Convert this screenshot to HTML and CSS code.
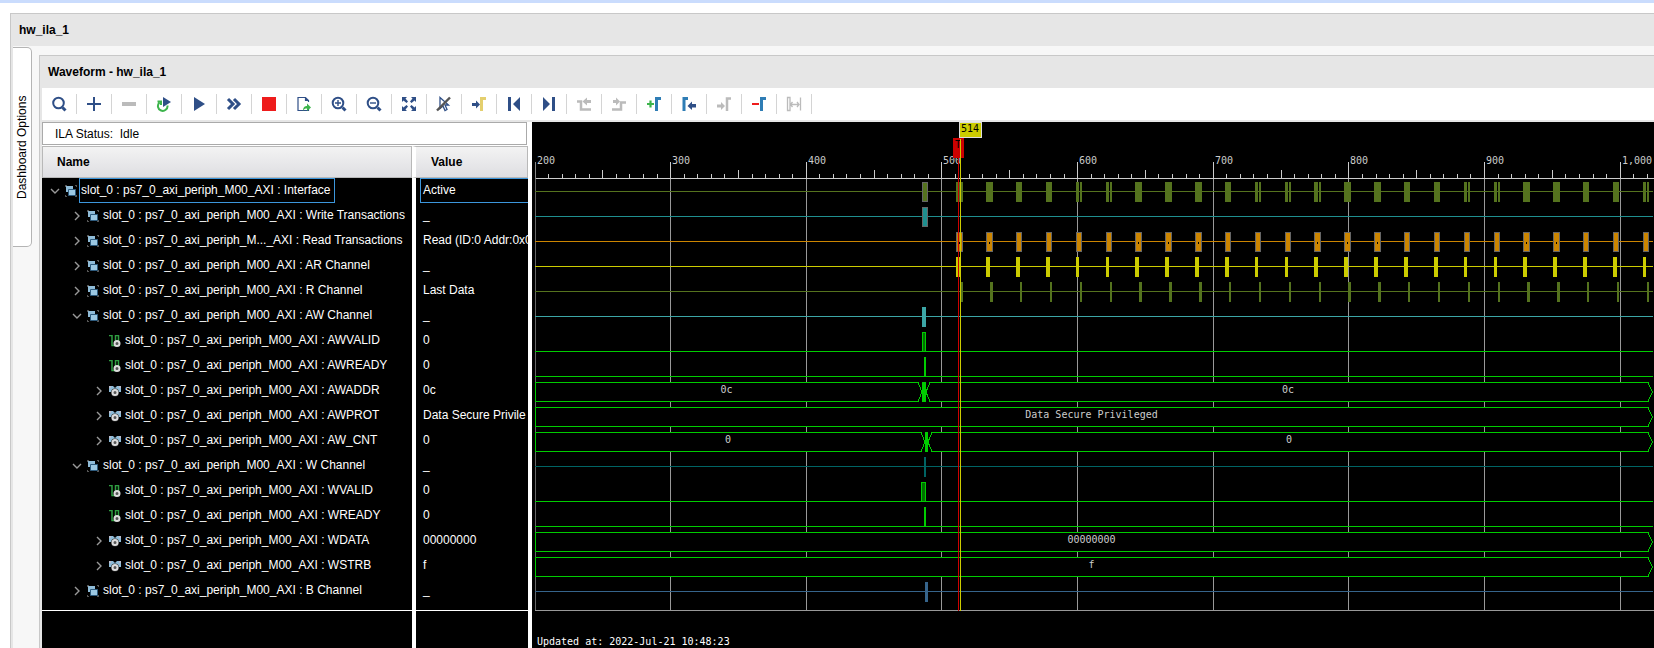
FILE: index.html
```html
<!DOCTYPE html>
<html lang="en">
  <head>
    <meta charset="utf-8">
    <title>hw_ila_1</title>
    <link rel="stylesheet" href="styles.css">
  </head>
  <body>
    <svg class="symbols">
      <symbol id="open" viewBox="0 0 10 10"><path d="M1 3l4 4 4-4" fill="none" stroke="#999" stroke-width="1.4"/></symbol>
      <symbol id="closed" viewBox="0 0 10 10"><path d="M3 1l4 4-4 4" fill="none" stroke="#999" stroke-width="1.4"/></symbol>
      <symbol id="group" viewBox="0 0 12 12">
        <path d="M0 .5h2M.5 0v2M10 .5h2M11.5 0v2M0 11.5h2M.5 10v2M10 11.5h2M11.5 10v2" stroke="#555"/>
        <path d="M1 1h7v6H1z" fill="#8fbcd8"/>
        <path d="M3.500 4.500h7v6h-7z" fill="#9cc8e2" stroke="#2d5a7d"/>
      </symbol>
      <symbol id="wire" viewBox="0 0 12 12">
        <path d="M0 .5h3v10h3.500v-10h3V6" fill="none" stroke="#2f9e41" stroke-width="1.500"/>
        <circle cx="8" cy="8.500" r="2.500" fill="#555" stroke="#ddd" stroke-width="2"/>
      </symbol>
      <symbol id="bus" viewBox="0 0 12 12">
        <path d="M0 1h4l2 2 2-2h4v6H0z" fill="#8fbcd8"/>
        <path d="M0 1h2v2H0zM10 1h2v2h-2z" fill="#bbc"/>
        <circle cx="6" cy="7.500" r="4" fill="#333"/>
        <circle cx="6" cy="7.500" r="2.500" fill="#555" stroke="#ddd" stroke-width="2"/>
      </symbol>
    </svg>

    <div class="dashboard">
      <h1 class="title">hw_ila_1</h1>
      <div class="content">
        <button class="side-tab">Dashboard Options</button>
        <div class="waveform">
          <h2 class="title">Waveform - hw_ila_1</h2>
          <div class="toolbar">
            <button title="Search"><svg viewBox="0 0 16 16"><circle cx="7.500" cy="7" r="5.300" class="line"/><path class="line thick" d="M11.500 11.500l3 3"/></svg></button>
            <button title="Add"><svg viewBox="0 0 16 16"><path class="navy" d="M7 1h2v6h6v2H9v6H7V9H1V7h6z"/></svg></button>
            <button title="Remove"><svg viewBox="0 0 16 16"><path class="grey" d="M1 6h14v4H1z"/></svg></button>
            <button title="Auto re-trigger"><svg viewBox="0 0 16 16"><path d="M1.500 5.500H5V9M3.500 6.500a4.800 4.800 0 1 0 8 3" fill="none" stroke="#3cb44b" stroke-width="2"/><path class="navy" d="M7 1l8 5-8 5z"/></svg></button>
            <button title="Run trigger"><svg viewBox="0 0 16 16"><path class="navy" d="M3 1l11 7-11 7z"/></svg></button>
            <button title="Run trigger immediate"><svg viewBox="0 0 16 16"><path class="line thick" d="M2 3l5 5-5 5M8 3l5 5-5 5"/></svg></button>
            <button title="Stop trigger"><svg viewBox="0 0 16 16"><path d="M1 1h14v14H1z" fill="#ee1c1c"/></svg></button>
            <button title="Export data"><svg viewBox="0 0 16 16"><path d="M12.500 6V4.500l-3-3h-7.500v13h10.500V13M9.500 1.500v3h3" fill="none" stroke="#2f4f87" stroke-width="1.200"/><path d="M7 15c0-4 2-5 4-5V7.500l4 4-4 3.500v-2.500c-2 0-3 .5-4 2.500z" fill="#3cb44b"/></svg></button>
            <button title="Zoom in"><svg viewBox="0 0 16 16"><circle cx="7" cy="7" r="5.300" class="line"/><path class="line thick" d="M11.500 11.500l3 3"/><path d="M4 7h6M7 4v6" stroke="#2f4f87" stroke-width="1.400"/></svg></button>
            <button title="Zoom out"><svg viewBox="0 0 16 16"><circle cx="7" cy="7" r="5.300" class="line"/><path class="line thick" d="M11.500 11.500l3 3"/><path d="M4 7h6" stroke="#2f4f87" stroke-width="1.400"/></svg></button>
            <button title="Zoom fit"><svg viewBox="0 0 16 16"><path class="navy" d="M1 1h5L4.500 2.500l2.500 3L5.500 7l-3-2.500L1 6zM15 1v5l-1.500-1.500-3 2.500L9 5.500l2.500-3L10 1zM1 15v-5l1.500 1.500 3-2.500L7 10.500l-2.500 3L6 15zM15 15h-5l1.500-1.500-2.500-3L10.500 9l3 2.500L15 10z"/></svg></button>
            <button title="Cursor snap"><svg viewBox="0 0 16 16"><path d="M4 1.500l8.500 7.500H9l2 4.500-2 1-2-4.500-3 2.500z" fill="none" stroke="#2f4f87" stroke-width="1.300"/><path d="M1 14.500L14 1.500" stroke="#555" stroke-width="2.400"/></svg></button>
            <button title="Go to cursor"><svg viewBox="0 0 16 16"><path class="navy" d="M1 7h4V4.500l4 4-4 4V10H1z"/><path d="M10.500 15V2.500H15" fill="none" stroke="#e4cf6e" stroke-width="3"/></svg></button>
            <button title="Go to start"><svg viewBox="0 0 16 16"><path class="navy" d="M2 1h3v14H2zM14 1v14L7 8z"/></svg></button>
            <button title="Go to end"><svg viewBox="0 0 16 16"><path class="navy" d="M11 1h3v14h-3zM2 1v14l7-7z"/></svg></button>
            <button title="Previous transition"><svg viewBox="0 0 16 16"><path d="M1 5.500h4v8h10" fill="none" stroke="#bbb" stroke-width="2.500"/><path class="grey" d="M15 4h-4V1.500L6.500 5.500 11 9.500V7h4z"/></svg></button>
            <button title="Next transition"><svg viewBox="0 0 16 16"><path d="M1 13.500h9v-7h5" fill="none" stroke="#bbb" stroke-width="2.500"/><path class="grey" d="M2 4h3V1.500l4 4-4 4V7H2z"/></svg></button>
            <button title="Add marker"><svg viewBox="0 0 16 16"><path d="M1 8h7M4.500 4.500v7" stroke="#3cb44b" stroke-width="2.200"/><path d="M10.500 15V2.500H15" fill="none" stroke="#2f7db5" stroke-width="3"/></svg></button>
            <button title="Previous marker"><svg viewBox="0 0 16 16"><path d="M3 15V2.500h4" fill="none" stroke="#2f7db5" stroke-width="3"/><path class="navy" d="M15 8h-4V5.500L6.500 10l4.500 4v-2.500h4z"/></svg></button>
            <button title="Next marker"><svg viewBox="0 0 16 16"><path d="M11 15V2.500h4" fill="none" stroke="#bbb" stroke-width="2.500"/><path class="grey" d="M1 8.500h4V6l4 4-4 4v-2.500H1z"/></svg></button>
            <button title="Remove marker"><svg viewBox="0 0 16 16"><path d="M1 8h7" stroke="#ee1c1c" stroke-width="2"/><path d="M10.500 15V2.500H15" fill="none" stroke="#2f7db5" stroke-width="3"/></svg></button>
            <button title="Measure"><svg viewBox="0 0 16 16"><path d="M1.500 1.500h2.500v13H1.500zM14.500 1.500v13M4 8.500h9M6.500 6l-2 2.500 2 2.500M11 6l2 2.500-2 2.500" fill="none" stroke="#bbb" stroke-width="1.300"/></svg></button>
          </div>

          <div class="panes">
            <div class="signals">
              <div class="status">ILA Status:&nbsp; Idle</div>
              <div class="table-wrap">
                <table>
                  <thead>
                    <tr><th class="name">Name</th><th class="value">Value</th></tr>
                  </thead>
                  <tbody>
                    <tr class="selected"><td><div class="node"><button class="toggle" aria-label="Collapse"><svg><use href="#open"/></svg></button><svg class="icon"><use href="#group"/></svg><span>slot_0 : ps7_0_axi_periph_M00_AXI : Interface</span></div></td><td><div class="val">Active</div></td></tr>
                    <tr><td><div class="node l1"><button class="toggle" aria-label="Expand"><svg><use href="#closed"/></svg></button><svg class="icon"><use href="#group"/></svg><span>slot_0 : ps7_0_axi_periph_M00_AXI : Write Transactions</span></div></td><td><div class="val">_</div></td></tr>
                    <tr><td><div class="node l1"><button class="toggle" aria-label="Expand"><svg><use href="#closed"/></svg></button><svg class="icon"><use href="#group"/></svg><span>slot_0 : ps7_0_axi_periph_M..._AXI : Read Transactions</span></div></td><td><div class="val">Read (ID:0 Addr:0x0</div></td></tr>
                    <tr><td><div class="node l1"><button class="toggle" aria-label="Expand"><svg><use href="#closed"/></svg></button><svg class="icon"><use href="#group"/></svg><span>slot_0 : ps7_0_axi_periph_M00_AXI : AR Channel</span></div></td><td><div class="val">_</div></td></tr>
                    <tr><td><div class="node l1"><button class="toggle" aria-label="Expand"><svg><use href="#closed"/></svg></button><svg class="icon"><use href="#group"/></svg><span>slot_0 : ps7_0_axi_periph_M00_AXI : R Channel</span></div></td><td><div class="val">Last Data</div></td></tr>
                    <tr><td><div class="node l1"><button class="toggle" aria-label="Collapse"><svg><use href="#open"/></svg></button><svg class="icon"><use href="#group"/></svg><span>slot_0 : ps7_0_axi_periph_M00_AXI : AW Channel</span></div></td><td><div class="val">_</div></td></tr>
                    <tr><td><div class="node l2 leaf"><svg class="icon"><use href="#wire"/></svg><span>slot_0 : ps7_0_axi_periph_M00_AXI : AWVALID</span></div></td><td><div class="val">0</div></td></tr>
                    <tr><td><div class="node l2 leaf"><svg class="icon"><use href="#wire"/></svg><span>slot_0 : ps7_0_axi_periph_M00_AXI : AWREADY</span></div></td><td><div class="val">0</div></td></tr>
                    <tr><td><div class="node l2"><button class="toggle" aria-label="Expand"><svg><use href="#closed"/></svg></button><svg class="icon"><use href="#bus"/></svg><span>slot_0 : ps7_0_axi_periph_M00_AXI : AWADDR</span></div></td><td><div class="val">0c</div></td></tr>
                    <tr><td><div class="node l2"><button class="toggle" aria-label="Expand"><svg><use href="#closed"/></svg></button><svg class="icon"><use href="#bus"/></svg><span>slot_0 : ps7_0_axi_periph_M00_AXI : AWPROT</span></div></td><td><div class="val">Data Secure Privile</div></td></tr>
                    <tr><td><div class="node l2"><button class="toggle" aria-label="Expand"><svg><use href="#closed"/></svg></button><svg class="icon"><use href="#bus"/></svg><span>slot_0 : ps7_0_axi_periph_M00_AXI : AW_CNT</span></div></td><td><div class="val">0</div></td></tr>
                    <tr><td><div class="node l1"><button class="toggle" aria-label="Collapse"><svg><use href="#open"/></svg></button><svg class="icon"><use href="#group"/></svg><span>slot_0 : ps7_0_axi_periph_M00_AXI : W Channel</span></div></td><td><div class="val">_</div></td></tr>
                    <tr><td><div class="node l2 leaf"><svg class="icon"><use href="#wire"/></svg><span>slot_0 : ps7_0_axi_periph_M00_AXI : WVALID</span></div></td><td><div class="val">0</div></td></tr>
                    <tr><td><div class="node l2 leaf"><svg class="icon"><use href="#wire"/></svg><span>slot_0 : ps7_0_axi_periph_M00_AXI : WREADY</span></div></td><td><div class="val">0</div></td></tr>
                    <tr><td><div class="node l2"><button class="toggle" aria-label="Expand"><svg><use href="#closed"/></svg></button><svg class="icon"><use href="#bus"/></svg><span>slot_0 : ps7_0_axi_periph_M00_AXI : WDATA</span></div></td><td><div class="val">00000000</div></td></tr>
                    <tr><td><div class="node l2"><button class="toggle" aria-label="Expand"><svg><use href="#closed"/></svg></button><svg class="icon"><use href="#bus"/></svg><span>slot_0 : ps7_0_axi_periph_M00_AXI : WSTRB</span></div></td><td><div class="val">f</div></td></tr>
                    <tr><td><div class="node l1"><button class="toggle" aria-label="Expand"><svg><use href="#closed"/></svg></button><svg class="icon"><use href="#group"/></svg><span>slot_0 : ps7_0_axi_periph_M00_AXI : B Channel</span></div></td><td><div class="val">_</div></td></tr>
                    <tr class="end"><td></td><td></td></tr>
                    <tr class="rest"><td></td><td></td></tr>
                  </tbody>
                </table>
              </div>
            </div>
            <div class="plot"><svg id="waves"></svg></div>
          </div>
        </div>
      </div>
    </div>
    <script src="waves.js"></script>
  </body>
</html>
```

FILE: styles.css
```css
* { box-sizing: border-box; }

body {
  margin: 0;
  height: 100vh;
  overflow: hidden;
  display: flex;
  flex-direction: column;
  border-top: 3px solid #cadcfd;
  background: #fff;
  color: #000;
  font: 12px "Liberation Sans", Arial, sans-serif;
}

button {
  margin: 0;
  padding: 0;
  border: 0;
  background: none;
  color: inherit;
  font: inherit;
}

.symbols { position: absolute; width: 0; height: 0; }

.dashboard {
  flex: 1;
  min-height: 0;
  display: flex;
  flex-direction: column;
  margin: 10px 0 0 10px;
  border: solid #c8c8c8;
  border-width: 1px 0 0 1px;
  background: #e6e6e6;
}

.title {
  margin: 0;
  padding-left: 8px;
  font-size: 12px;
  font-weight: bold;
  line-height: 32px;
}

.content {
  flex: 1;
  min-height: 0;
  display: flex;
  align-items: flex-start;
  margin-left: 2px;
  background: #f7f7f7;
}

.side-tab {
  width: 19px;
  height: 200px;
  margin: 1px 7px 0 0;
  border: 1px solid #b4b4b4;
  border-width: 1px 0 1px 1px;
  border-radius: 5px 0 0 5px;
  background: #fff;
  writing-mode: vertical-rl;
  transform: rotate(180deg);
}

.waveform {
  flex: 1;
  min-width: 0;
  align-self: stretch;
  display: flex;
  flex-direction: column;
  margin-top: 9px;
  padding-left: 2px;
  border: solid #c8c8c8;
  border-width: 1px 0 0 1px;
  background: #e6e6e6;
}
.waveform .title { padding-left: 6px; }

.toolbar {
  display: flex;
  align-items: center;
  height: 32px;
  background: #fff;
}
.toolbar button {
  display: flex;
  align-items: center;
  justify-content: center;
  width: 35px;
  height: 20px;
  border-right: 1px solid #d4d4d4;
}
.toolbar svg { width: 16px; height: 16px; }
.navy { fill: #2f4f87; }
.grey { fill: #bbb; }
.line { fill: none; stroke: #2f4f87; stroke-width: 2; }
.thick { stroke-width: 3; }

.panes {
  flex: 1;
  min-height: 0;
  display: flex;
  gap: 4px;
  margin-top: 2px;
  background: #fff;
}

.signals {
  flex: none;
  width: 486px;
  display: flex;
  flex-direction: column;
}
.status {
  height: 23px;
  margin: 0 1px 1px 0;
  padding-left: 12px;
  border: 1px solid #aaa;
  line-height: 22px;
}
.table-wrap { flex: 1; min-height: 0; }

table {
  width: 100%;
  height: 100%;
  table-layout: fixed;
  border-collapse: separate;
  border-spacing: 0;
}
th {
  height: 32px;
  padding: 0 0 0 14px;
  border: 1px solid #b8b8b8;
  background: linear-gradient(#f3f3f3, #dedee2);
  background-clip: padding-box;
  text-align: left;
}
.value {
  width: 116px;
  padding-left: 15px;
  border-left: 4px solid #fff;
}
td {
  height: 25px;
  padding: 0;
  overflow: hidden;
  background: #000;
  color: #fff;
  white-space: nowrap;
}
td + td { border-left: 4px solid #fff; }

.node {
  display: flex;
  align-items: center;
  height: 25px;
  padding-left: 8px;
}
.l1 { padding-left: 30px; }
.l2 { padding-left: 52px; }
.leaf { padding-left: 67px; }
.toggle { width: 10px; height: 10px; margin-right: 5px; }
.toggle svg { display: block; width: 10px; height: 10px; }
.icon { flex: none; width: 12px; height: 12px; margin-right: 2px; }
.node span {
  padding: 0 3px 0 1px;
  border: 1px solid transparent;
  line-height: 23px;
}
.val {
  height: 25px;
  margin-left: 4px;
  padding-left: 2px;
  border: 1px solid transparent;
  border-right: 0;
  line-height: 23px;
}
.selected span, .selected .val { border-color: #3c96dc; }

.end td { height: 8px; border-bottom: 1px solid #fff; }
.rest td { height: auto; }

.plot {
  flex: 1;
  min-width: 0;
  background: #000;
}
#waves {
  display: block;
  width: 100%;
  height: 100%;
  shape-rendering: crispEdges;
}
#waves text {
  fill: #ccc;
  font: 10px "DejaVu Sans Mono", monospace;
  white-space: pre;
}
#waves .mid { text-anchor: middle; }
#waves .dark { fill: #000; }
#waves .updated { fill: #fff; }
```

FILE: waves.js
```js
var svg = document.getElementById('waves');
var width = svg.clientWidth;
var LEFT = 3, TOP = 56, ROW = 25, RIGHT = width - 2;
var BOTTOM = 488;
var GREEN = '#00cc00';

function add(tag, attrs, text) {
  var el = document.createElementNS('http://www.w3.org/2000/svg', tag);
  for (var k in attrs) el.setAttribute(k, attrs[k]);
  if (text) el.textContent = text;
  svg.appendChild(el);
}
function rect(x, y, w, h, fill) {
  add('rect', { x: x, y: y, width: w, height: h, fill: fill });
}
function boxed(x, y, w, fill) {
  rect(x, y, w, 20, '#666');
  rect(x + 1, y + 1, w - 2, 18, fill);
}
function text(x, y, s, cls) {
  add('text', { x: x, y: y, 'class': cls || '' }, s);
}
function line(points) {
  add('polyline', { points: points, fill: 'none', stroke: GREEN });
}
function rowTop(i) { return TOP + i * ROW; }

// ruler and grid
rect(LEFT, TOP, width - LEFT, 1, '#ccc');
for (var t = 200; ; t += 10) {
  var x = Math.floor(LEFT + (t - 200) * 1.3565);
  if (x > RIGHT) break;
  if (t % 100 == 0) {
    rect(x, 40, 1, 17, t == 200 ? '#888' : '#ccc');
    rect(x, TOP + 1, 1, BOTTOM - TOP, t == 200 ? '#666' : '#999');
    text(x + 2, 42, t.toLocaleString('en-US'));
  } else {
    var h = t % 50 == 0 ? 8 : 4;
    rect(x, TOP - h, 1, h, '#ccc');
  }
}
rect(LEFT, BOTTOM, width - LEFT, 1, '#999');

// idle level of every channel row
var channels = { 0: '#55731e', 1: '#1f8f8f', 2: '#cc8500', 3: '#cccc00',
  4: '#55731e', 5: '#3ca6a6', 11: '#006464', 16: '#36648b' };
for (var i in channels) {
  rect(LEFT, rowTop(+i) + 13, RIGHT - LEFT + 1, 1, channels[i]);
}

// read bursts: start, length, whether a gap shows between address and data
var bursts = [
  [424, 7], [454, 7], [484, 6], [514, 6], [544, 6, 1], [574, 6, 1],
  [603, 7], [633, 7], [663, 7], [693, 6], [723, 6, 1], [753, 6, 1],
  [782, 7, 1], [812, 7], [842, 7], [872, 6], [902, 6], [932, 6, 1],
  [962, 6, 1], [991, 7], [1021, 7], [1051, 6], [1081, 6], [1111, 6, 1]
];
bursts.forEach(function (b) {
  var x = b[0], w = b[1], gap = b[2];
  var addr = gap && w == 6 ? 3 : 4;
  var data = w == 7 && gap ? 5 : 4;
  if (gap) {
    rect(x, rowTop(0) + 4, addr, 20, channels[0]);
    rect(x + data, rowTop(0) + 4, w - data, 20, channels[0]);
  } else {
    rect(x, rowTop(0) + 4, w, 20, channels[0]);
  }
  boxed(x, rowTop(2) + 4, w, channels[2]);
  if (w == 7) rect(x + 3, rowTop(2) + 14, 1, 2, '#000');
  rect(x, rowTop(3) + 4, addr, 20, channels[3]);
  rect(x + data, rowTop(4) + 4, w - data, 20, channels[4]);
});

// the single write
boxed(390, rowTop(0) + 4, 6, channels[0]);
boxed(390, rowTop(1) + 4, 6, channels[1]);
rect(390, rowTop(5) + 4, 4, 20, channels[5]);
rect(392, rowTop(11) + 4, 2, 20, channels[11]);
rect(393, rowTop(16) + 4, 3, 20, channels[16]);

// single bit signals: row, pulse start, pulse length
[[6, 390, 4], [7, 392, 2], [12, 389, 5], [13, 392, 2]].forEach(function (s) {
  var y = rowTop(s[0]);
  rect(LEFT, y + 23, RIGHT - LEFT + 1, 1, GREEN);
  rect(s[1], y + 4, s[2], 20, GREEN);
  if (s[2] > 2) rect(s[1] + 1, y + 5, s[2] - 2, 18, '#006e00');
});

// buses: row, label, x of the value change, width of the change
[[8, '0c', 390, 4], [9, 'Data Secure Privileged'], [10, '0', 393, 3],
 [14, '00000000'], [15, 'f']].forEach(function (b) {
  var y0 = rowTop(b[0]) + 4, y1 = y0 + 19, mid = y0 + 10;
  var end = RIGHT - 4, c = b[2];
  rect(LEFT, y0, RIGHT - LEFT, 20, '#000');
  rect(LEFT, y0, 1, 20, GREEN);
  y0 += 0.5;
  y1 += 0.5;
  var tail = end + ',' + y0 + ' ' + (RIGHT + 0.5) + ',' + mid + ' ' + end + ',' + y1;
  if (c) {
    var r = c + b[3];
    line(LEFT + ',' + y0 + ' ' + (c - 4) + ',' + y0 + ' ' + c + ',' + mid + ' ' + (c - 4) + ',' + y1 + ' ' + LEFT + ',' + y1);
    line((r + 4) + ',' + y0 + ' ' + tail + ' ' + (r + 4) + ',' + y1 + ' ' + r + ',' + mid + ' ' + (r + 4) + ',' + y0);
    rect(c, y0 - 0.5, b[3], 20, GREEN);
    text((LEFT + c) / 2 - 2, y0 + 10.5, b[1], 'mid');
    text((r + RIGHT) / 2 - 1, y0 + 10.5, b[1], 'mid');
  } else {
    line(LEFT + ',' + y0 + ' ' + tail + ' ' + LEFT + ',' + y1);
    text((LEFT + RIGHT) / 2 - 2, y0 + 10.5, b[1], 'mid');
  }
});

// trigger flag and cursor
rect(421, 16, 11, 20, '#cc0000');
text(423, 26, 'T', 'dark');
rect(426, 36, 1, BOTTOM - 35, '#cc0000');
rect(428, 17, 1, BOTTOM - 16, '#cccc00');
rect(427, 0, 23, 16, '#ddd');
rect(428, 1, 21, 14, '#cccc00');
text(429, 10, '514', 'dark');

text(5, 523, 'Updated at: 2022-Jul-21 10:48:23', 'updated');
```
